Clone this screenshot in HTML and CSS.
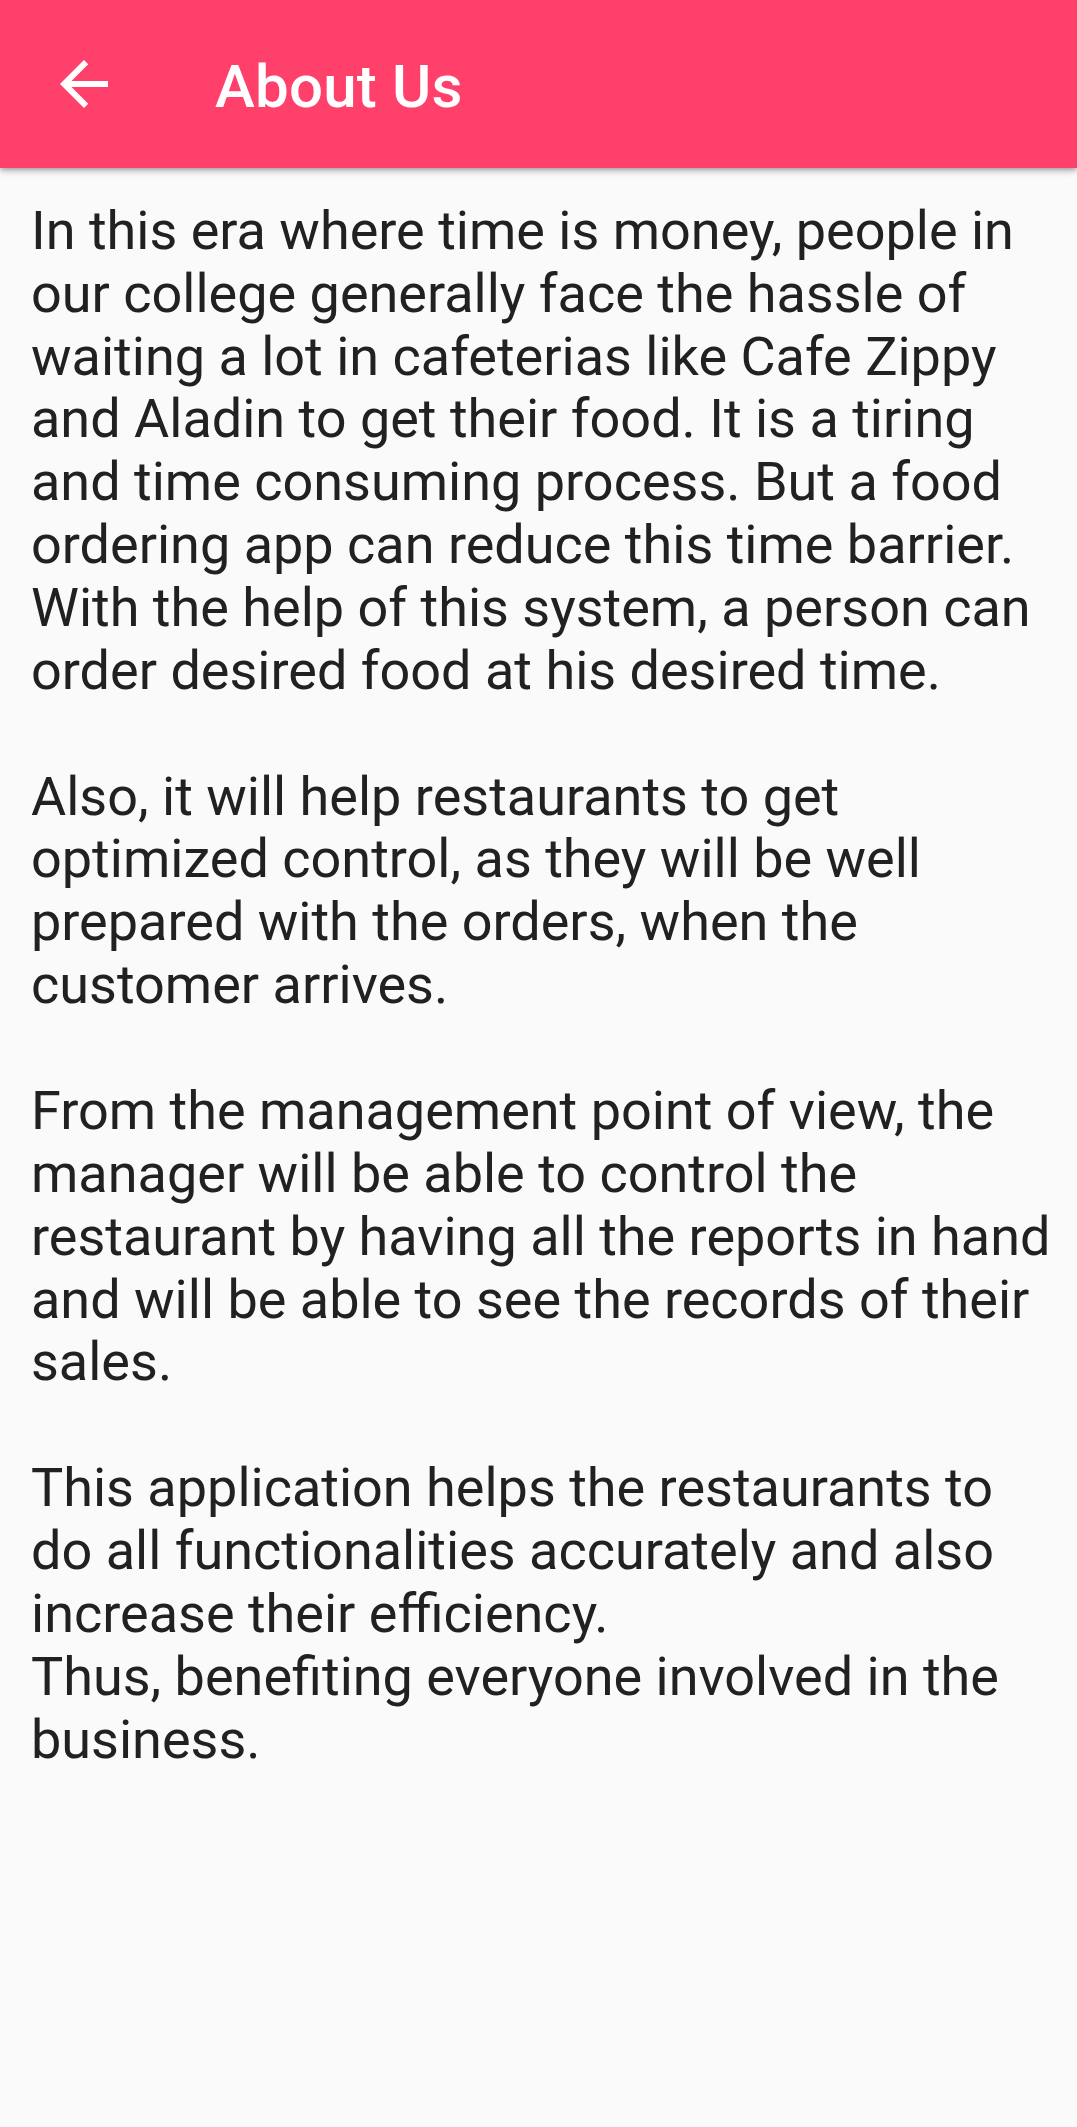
FILE: index.html
```html
<!DOCTYPE html>
<html lang="en">
<head>
<meta charset="utf-8">
<title>About Us</title>
<link rel="stylesheet" href="styles.css">
</head>
<body>
<header class="appbar">
  <button class="back" aria-label="Back">
    <svg viewBox="0 0 24 24" width="72" height="72"><path fill="#ffffff" d="M20 11H7.83l5.59-5.59L12 4l-8 8 8 8 1.41-1.41L7.83 13H20v-2z"/></svg>
  </button>
  <h1 class="title">About Us</h1>
</header>
<main class="content">
  <p class="para">In this era where time is money, people in our college generally face the hassle of waiting a lot in cafeterias like Cafe Zippy and Aladin to get their food. It is a tiring and time consuming process. But a food ordering app can reduce this time barrier. With the help of this system, a person can order desired food at his desired time.</p>
  <p class="para">Also, it will help restaurants to get optimized control, as they will be well prepared with the orders, when the customer arrives.</p>
  <p class="para">From the management point of view, the manager will be able to control the restaurant by having all the reports in hand and will be able to see the records of their sales.</p>
  <p class="para">This application helps the restaurants to do all functionalities accurately and also increase their efficiency.<br>Thus, benefiting everyone involved in the business.</p>
</main>
</body>
</html>
```
FILE: styles.css
```css
html, body {
  margin: 0;
  padding: 0;
}
body {
  background: #fafafa;
  font-family: Roboto, "Noto Sans", sans-serif;
  color: #212121;
  width: 1077px;
  min-height: 2127px;
}
.appbar {
  height: 168px;
  background: #ff406b;
  display: flex;
  align-items: center;
  padding-left: 48px;
  box-sizing: border-box;
  box-shadow: 0 2px 4px -1px rgba(0,0,0,0.2), 0 4px 5px 0 rgba(0,0,0,0.14), 0 1px 10px 0 rgba(0,0,0,0.12);
  position: relative;
  z-index: 1;
}
.back {
  width: 72px;
  height: 72px;
  padding: 0;
  border: 0;
  background: none;
  display: block;
}
.back svg {
  display: block;
}
.title {
  margin: 0 0 0 95px;
  padding-top: 6px;
  font-size: 60px;
  font-weight: 500;
  color: #ffffff;
  line-height: 1.172;
  letter-spacing: 0.2px;
}
.content {
  padding: 32px 24px 0 31px;
}
.para {
  margin: 0 0 63.3px 0;
  font-size: 54px;
  line-height: 62.8px;
  font-weight: 400;
}
```
